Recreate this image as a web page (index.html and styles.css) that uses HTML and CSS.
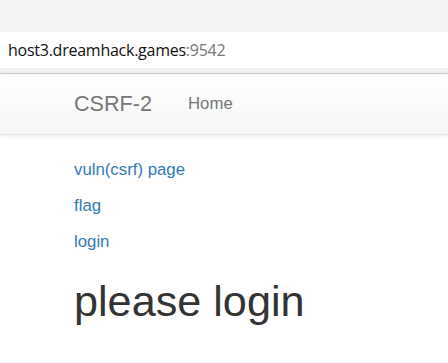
FILE: index.html
```html
<html>
	<head>
		<meta charset="utf-8">
		<title>CSRF-2</title>
		<link rel="stylesheet" href="styles.css">
	</head>
	<body>
		<div class="chrome">
			<div class="chrome-top"></div>
			<div class="urlbar">
				<span class="url-host">host3.dreamhack.games</span><span class="url-port">:9542</span>
			</div>
			<div class="chrome-gap"></div>
		</div>
		<nav class="navbar">
			<div class="container nav-inner">
				<a class="brand" href="#">CSRF-2</a>
				<a class="nav-link" href="#">Home</a>
			</div>
		</nav>
		<div class="container content">
			<p><a href="#">vuln(csrf) page</a></p>
			<p><a href="#">flag</a></p>
			<p><a href="#">login</a></p>
			<h1>please login</h1>
		</div>
	</body>
</html>
```

FILE: styles.css
```css
html, body {
	margin		: 0;
	padding		: 0;
	background	: #fff;
}
body {
	font-family	: "Liberation Sans", Arial, sans-serif;
	font-size	: 16.8px;
	line-height	: 24px;
	color		: #333;
	overflow	: hidden;
}
a {
	text-decoration	: none;
}

/* fake browser chrome */
.chrome-top {
	height		: 32px;
	background	: #f3f3f3;
}
.urlbar {
	height		: 36px;
	background	: #fff;
	padding-left	: 8px;
	display		: flex;
	align-items	: center;
	font-family	: "Open Sans", "Noto Sans", sans-serif;
	font-size	: 16px;
	letter-spacing	: -0.25px;
}
.url-host {
	color		: #111;
}
.url-port {
	color		: #777;
}
.chrome-gap {
	height		: 5px;
	background	: #f0f0f0;
	border-bottom	: 1px solid #cfcfcf;
}

/* navbar */
.navbar {
	height		: 60px;
	background-image: linear-gradient(to bottom, #fff 0, #f6f6f6 100%);
	border-bottom	: 1px solid #e3e3e3;
	box-shadow	: 0 1px 5px rgba(0,0,0,.075);
}
.container {
	padding-left	: 74px;
}
.nav-inner {
	display		: flex;
	align-items	: center;
	height		: 100%;
}
.brand {
	font-size	: 21.6px;
	color		: #777;
	margin-right	: 36px;
}
.nav-link {
	font-size	: 16.8px;
	color		: #777;
}

/* content */
.content {
	padding-top	: 23px;
}
.content p {
	margin		: 0 0 12px;
}
.content a {
	color		: #337ab7;
}
h1 {
	font-size	: 43.2px;
	font-weight	: 500;
	line-height	: 1.1;
	margin		: 24px 0 0;
	color		: #333;
}
```
